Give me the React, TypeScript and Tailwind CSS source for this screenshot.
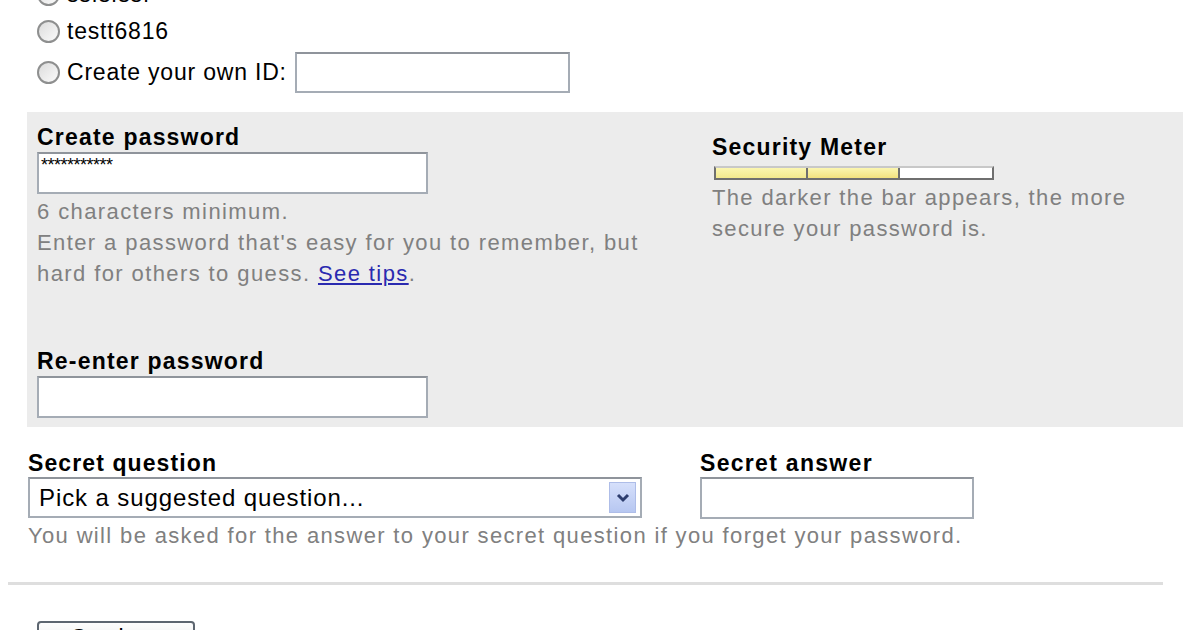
import React from 'react';

const Radio: React.FC = () => (
  <span className="inline-block w-[23px] h-[23px] rounded-full border-2 border-[#8e8f8f] bg-gradient-to-br from-[#dcdcdc] to-[#fbfbfb] mr-[7px] shrink-0" />
);

const TextBox: React.FC<{ className?: string; children?: React.ReactNode }> = ({ className = '', children }) => (
  <div className={`bg-white border-2 border-[#a5acb5] border-t-[#8f949b] ${className}`}>{children}</div>
);

export default function App() {
  return (
    <div className="w-[1200px] h-[630px] overflow-hidden bg-white text-black font-['Liberation_Sans',Arial,sans-serif]">
      {/* username suggestions */}
      <div className="pl-[37px] -mt-[24px] flex flex-col text-[23px] leading-none tracking-[0.8px]">
        <div className="flex items-center h-[36px]">
          <Radio />
          <span>ssfsfssf</span>
        </div>
        <div className="flex items-center h-[36px] mt-[1px]">
          <Radio />
          <span>testt6816</span>
        </div>
        <div className="flex items-center h-[44px] mt-[1px]">
          <Radio />
          <span>Create your own ID:</span>
          <TextBox className="ml-[8px] w-[275px] h-[41px]" />
        </div>
      </div>

      {/* password block */}
      <div className="ml-[27px] mt-[18px] w-[1156px] h-[315px] bg-[#ececec] flex pl-[10px] pt-[10px]">
        <div className="w-[675px] flex flex-col">
          <div className="text-[23px] font-bold leading-[30px] tracking-[1.2px]">Create password</div>
          <TextBox className="w-[391px] h-[42px] px-[2px] pt-[2px] text-[18px] leading-[18px] tracking-[-0.5px]">
            ***********
          </TextBox>
          <div className="text-[22px] leading-[31px] text-[#808080] mt-[2px] tracking-[1.4px]">
            <div>6 characters minimum.</div>
            <div>
              Enter a password that's easy for you to remember, but
              <br />
              hard for others to guess.{' '}
              <span className="text-[#2a2ab0] underline">See tips</span>.
            </div>
          </div>
          <div className="text-[23px] font-bold leading-[30px] mt-[57px] tracking-[1.2px]">Re-enter password</div>
          <TextBox className="w-[391px] h-[42px]" />
        </div>
        <div className="flex flex-col pt-[10px]">
          <div className="text-[23px] font-bold leading-[30px] tracking-[1.2px]">Security Meter</div>
          <div className="mt-[4px] ml-[2px] w-[280px] h-[14px] border-2 border-[#6f6f6f] border-t-[#c8c8c8] bg-white flex">
            <div className="w-[92px] h-full bg-gradient-to-b from-[#fbf6b0] to-[#f3e98d] border-r-2 border-[#6f6f6f]" />
            <div className="w-[92px] h-full bg-gradient-to-b from-[#fbf6b0] to-[#f3e27e] border-r-2 border-[#6f6f6f]" />
          </div>
          <div className="text-[22px] leading-[31px] text-[#808080] mt-[2px] tracking-[1.35px]">
            The darker the bar appears, the more
            <br />
            secure your password is.
          </div>
        </div>
      </div>

      {/* secret question */}
      <div className="pl-[28px] mt-[22px] flex">
        <div className="w-[672px] flex flex-col">
          <div className="text-[23px] font-bold leading-[28px] tracking-[1.1px]">Secret question</div>
          <TextBox className="w-[614px] h-[41px] flex items-center justify-between pl-[9px] pr-[4px]">
            <span className="text-[24px] leading-none tracking-[0.9px]">Pick a suggested question...</span>
            <span className="w-[27px] h-[31px] bg-gradient-to-b from-[#d6e0fb] to-[#b7c7f1] border border-[#aebde8] flex items-center justify-center">
              <svg width="14" height="10" viewBox="0 0 14 10">
                <path d="M2 2 L7 7 L12 2" fill="none" stroke="#2d3d6e" strokeWidth="3" />
              </svg>
            </span>
          </TextBox>
        </div>
        <div className="flex flex-col">
          <div className="text-[23px] font-bold leading-[28px] tracking-[1.3px]">Secret answer</div>
          <TextBox className="w-[274px] h-[42px]" />
        </div>
      </div>
      <div className="pl-[28px] text-[22px] leading-[30px] text-[#808080] mt-[2px] tracking-[1.35px]">
        You will be asked for the answer to your secret question if you forget your password.
      </div>

      <div className="ml-[8px] mt-[31px] w-[1155px] h-[3px] bg-[#dedede]" />

      <div className="pl-[37px] mt-[36px]">
        <div className="w-[158px] h-[40px] rounded-[4px] border-2 border-[#5d6670] bg-gradient-to-b from-[#fdfdfd] to-[#e3e3e3] flex justify-center pt-[4px] text-[23px] leading-none">
          Continue
        </div>
      </div>
    </div>
  );
}
